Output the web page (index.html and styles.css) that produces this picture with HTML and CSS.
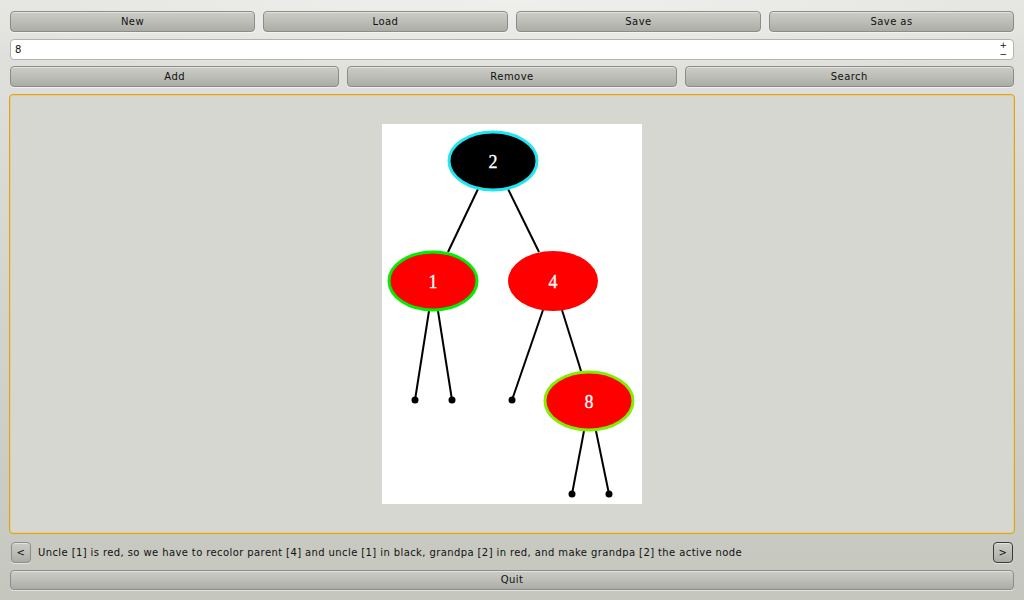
FILE: index.html
```html
<!DOCTYPE html>
<html>
<head>
<meta charset="utf-8">
<link rel="stylesheet" href="styles.css">
</head>
<body>
<div class="app">
  <div class="row four">
    <button class="btn">New</button>
    <button class="btn">Load</button>
    <button class="btn">Save</button>
    <button class="btn">Save as</button>
  </div>
  <div class="spin">
    <span class="spin-value">8</span>
    <span class="spin-arrows"><span>+</span><span>−</span></span>
  </div>
  <div class="row three">
    <button class="btn">Add</button>
    <button class="btn">Remove</button>
    <button class="btn">Search</button>
  </div>
  <div class="panel">
    <div class="canvas">
      <svg width="260" height="380" viewBox="0 0 260 380" xmlns="http://www.w3.org/2000/svg">
        <g stroke="#000" stroke-width="2" fill="none">
          <line x1="96" y1="65" x2="66" y2="128"/>
          <line x1="126" y1="65" x2="157" y2="128"/>
          <line x1="47" y1="187" x2="33" y2="276"/>
          <line x1="56" y1="187" x2="70" y2="276"/>
          <line x1="161" y1="186" x2="130" y2="276"/>
          <line x1="180" y1="186" x2="199" y2="247"/>
          <line x1="202" y1="307" x2="190" y2="370"/>
          <line x1="214" y1="307" x2="227" y2="370"/>
        </g>
        <g fill="#000">
          <circle cx="33" cy="276" r="3.5"/>
          <circle cx="70" cy="276" r="3.5"/>
          <circle cx="130" cy="276" r="3.5"/>
          <circle cx="190" cy="370" r="3.5"/>
          <circle cx="227" cy="370" r="3.5"/>
        </g>
        <ellipse cx="111" cy="37" rx="44" ry="29" fill="#000" stroke="#1ee6f2" stroke-width="3"/>
        <ellipse cx="51" cy="157" rx="44" ry="29" fill="#ff0000" stroke="#00ee00" stroke-width="3"/>
        <ellipse cx="171" cy="157" rx="45" ry="30" fill="#ff0000"/>
        <ellipse cx="207" cy="277" rx="44" ry="29" fill="#ff0000" stroke="#7fee00" stroke-width="3"/>
        <g class="lbl" fill="#fff" stroke="#fff" stroke-width="0.3" text-anchor="middle">
          <text x="111" y="44">2</text>
          <text x="51" y="164">1</text>
          <text x="171" y="164">4</text>
          <text x="207" y="284">8</text>
        </g>
      </svg>
    </div>
  </div>
  <div class="steps">
    <button class="btn small">&lt;</button>
    <span class="msg">Uncle [1] is red, so we have to recolor parent [4] and uncle [1] in black, grandpa [2] in red, and make grandpa [2] the active node</span>
    <button class="btn small focus">&gt;</button>
  </div>
  <button class="btn wide">Quit</button>
</div>
</body>
</html>
```

FILE: styles.css
```css
html, body {
  margin: 0;
  padding: 0;
  width: 1024px;
  height: 600px;
  overflow: hidden;
}
body {
  background: radial-gradient(ellipse 700px 80px at 50% 0, #efefed 0%, rgba(239,239,237,0) 100%),
              linear-gradient(to bottom, #e2e3df 0%, #d6d7d1 40%, #c5c6be 100%);
  font-family: "DejaVu Sans", sans-serif;
  font-size: 10px;
  color: #111;
}
.app {
  box-sizing: border-box;
  height: 600px;
  padding: 11px 10px 10px 10px;
  display: flex;
  flex-direction: column;
  gap: 7px;
}
.row {
  display: flex;
  gap: 8px;
  height: 21px;
}
.row .btn { flex: 1; }
.btn {
  box-sizing: border-box;
  height: 21px;
  margin: 0;
  padding: 0;
  border: 1px solid #8c8d88;
  border-radius: 4px;
  background: linear-gradient(to bottom, #cbccc6 0%, #bdbeb8 50%, #abaca6 100%);
  box-shadow: inset 0 1px 0 rgba(255,255,255,0.45), 0 1px 0 rgba(255,255,255,0.5);
  font-family: "DejaVu Sans", sans-serif;
  font-size: 10px;
  letter-spacing: 0.45px;
  color: #111;
  line-height: 19px;
  text-align: center;
}
.spin {
  box-sizing: border-box;
  height: 21px;
  margin-bottom: -1px;
  background: #fff;
  border: 1px solid #b3b4ae;
  border-radius: 4px;
  display: flex;
  align-items: center;
  padding: 0 6px 0 4px;
}
.spin-value { flex: 1; }
.spin-arrows {
  display: flex;
  flex-direction: column;
  line-height: 9px;
  font-size: 9px;
}
.panel {
  flex: 1;
  margin: 0 -1px;
  box-sizing: border-box;
  border: 1px solid #d9a520;
  box-shadow: inset 0 0 0 1px rgba(240,200,90,0.6);
  border-radius: 4px;
  background: #d5d7d0;
  display: flex;
  align-items: center;
  justify-content: center;
}
.canvas {
  width: 260px;
  height: 380px;
  background: #fff;
}
.canvas svg { display: block; }
.lbl {
  font-family: "Liberation Serif", serif;
  font-size: 18px;
}
.steps {
  display: flex;
  align-items: center;
  height: 21px;
  margin-top: 1px;
}
.btn.small {
  width: 20px;
  height: 21px;
  flex: none;
  margin-left: 1px;
}
.btn.focus {
  border: 1px solid #3a3a38;
  margin-left: 0;
  margin-right: 1px;
}
.msg {
  flex: 1;
  margin-left: 7px;
  font-size: 10px;
  letter-spacing: 0.4px;
  white-space: nowrap;
}
.btn.wide { width: 100%; height: 20px; line-height: 18px; }
```
